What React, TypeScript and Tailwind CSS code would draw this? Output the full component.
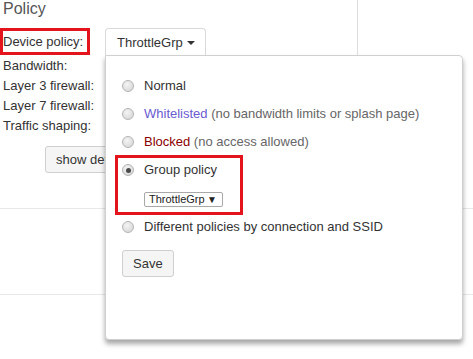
import React from "react";

function Radio({ checked = false }: { checked?: boolean }) {
  return (
    <span className="mt-[4px] flex h-[12px] w-[12px] shrink-0 items-center justify-center rounded-full border border-[#b4b4b4] bg-[radial-gradient(circle_at_40%_35%,#f4f4f4,#d2d2d2)]">
      {checked && <span className="h-[5px] w-[5px] rounded-full bg-[#4a4a4a]" />}
    </span>
  );
}

function Row({ children, checked = false, className = "" }: { children: React.ReactNode; checked?: boolean; className?: string }) {
  return (
    <div className={"flex h-[20px] items-start leading-[20px] " + className}>
      <Radio checked={checked} />
      <span className="ml-[10px] whitespace-nowrap">{children}</span>
    </div>
  );
}

export default function App() {
  return (
    <div
      className="relative h-[359px] w-[473px] overflow-hidden bg-white text-[13px] text-[#333]"
      style={{ fontFamily: '"Liberation Sans", Arial, sans-serif' }}
    >
      <div className="flex h-[209px] border-b border-[#e8e8e8]">
        <div className="w-[358px] border-r border-[#dedede]">
          <div className="pl-[3px] text-[16px] leading-[18px] text-[#555]">Policy</div>
          <div className="mt-[10px] flex h-[27px] items-start">
            <div className="flex h-[27px] w-[90px] items-center whitespace-nowrap border-[3px] border-[#e3141c] leading-[15px]">
              Device policy:
            </div>
            <div className="ml-[15px] flex h-[27px] items-center whitespace-nowrap rounded-t-[4px] border border-b-0 border-[#d9d9d9] bg-white pl-[11px] pr-[10px] leading-[15px]">
              ThrottleGrp
              <span className="ml-[4px] mt-[1px] h-0 w-0 border-x-[4px] border-t-[4px] border-x-transparent border-t-[#333]" />
            </div>
          </div>
          <div className="mt-[1px] pl-[3px] leading-[20px]">
            <div>Bandwidth:</div>
            <div>Layer 3 firewall:</div>
            <div>Layer 7 firewall:</div>
            <div>Traffic shaping:</div>
          </div>
          <button className="ml-[45px] mt-[10px] flex h-[27px] items-center whitespace-nowrap rounded-[3px] border border-[#cfcfcf] bg-[#f5f5f5] pl-[10px] pr-[12px] leading-[15px] text-[#333]">
            show details
          </button>
        </div>
        <div className="flex-1" />
      </div>
      <div className="h-[86px] border-b border-[#e8e8e8]" />

      <div className="absolute left-[105px] top-[55px] h-[285px] w-[358px] rounded-b-[4px] rounded-tr-[4px] border border-[#d0d0d0] bg-white pl-[16px] pt-[20px] shadow-[0_4px_5px_rgba(0,0,0,0.35)]">
        <Row>Normal</Row>
        <Row className="mt-[8px]">
          <span className="text-[#6a5bd0]">Whitelisted</span>
          <span className="text-[#666]"> (no bandwidth limits or splash page)</span>
        </Row>
        <Row className="mt-[8px]">
          <span className="text-[#8b0000]">Blocked</span>
          <span className="text-[#666]"> (no access allowed)</span>
        </Row>
        <Row className="mt-[8px]" checked>
          Group policy
        </Row>
        <div className="ml-[22px] mt-[12px] flex h-[15px] w-[79px] items-center justify-between rounded-[2px] border border-[#a8a8a8] bg-white pl-[4px] pr-[5px] text-[11px] leading-[13px] text-[#222]">
          <span>ThrottleGrp</span>
          <span className="text-[10px] leading-[10px]">▼</span>
        </div>
        <Row className="mt-[10px]">Different policies by connection and SSID</Row>
        <button className="mt-[13px] flex h-[27px] w-[52px] items-center rounded-[3px] border border-[#cfcfcf] bg-[#f5f5f5] pl-[10px] leading-[15px] text-[#333]">
          Save
        </button>

        <div className="pointer-events-none absolute left-[9px] top-[99px] h-[60px] w-[128px] border-[3px] border-[#e3141c]" />
      </div>
    </div>
  );
}
